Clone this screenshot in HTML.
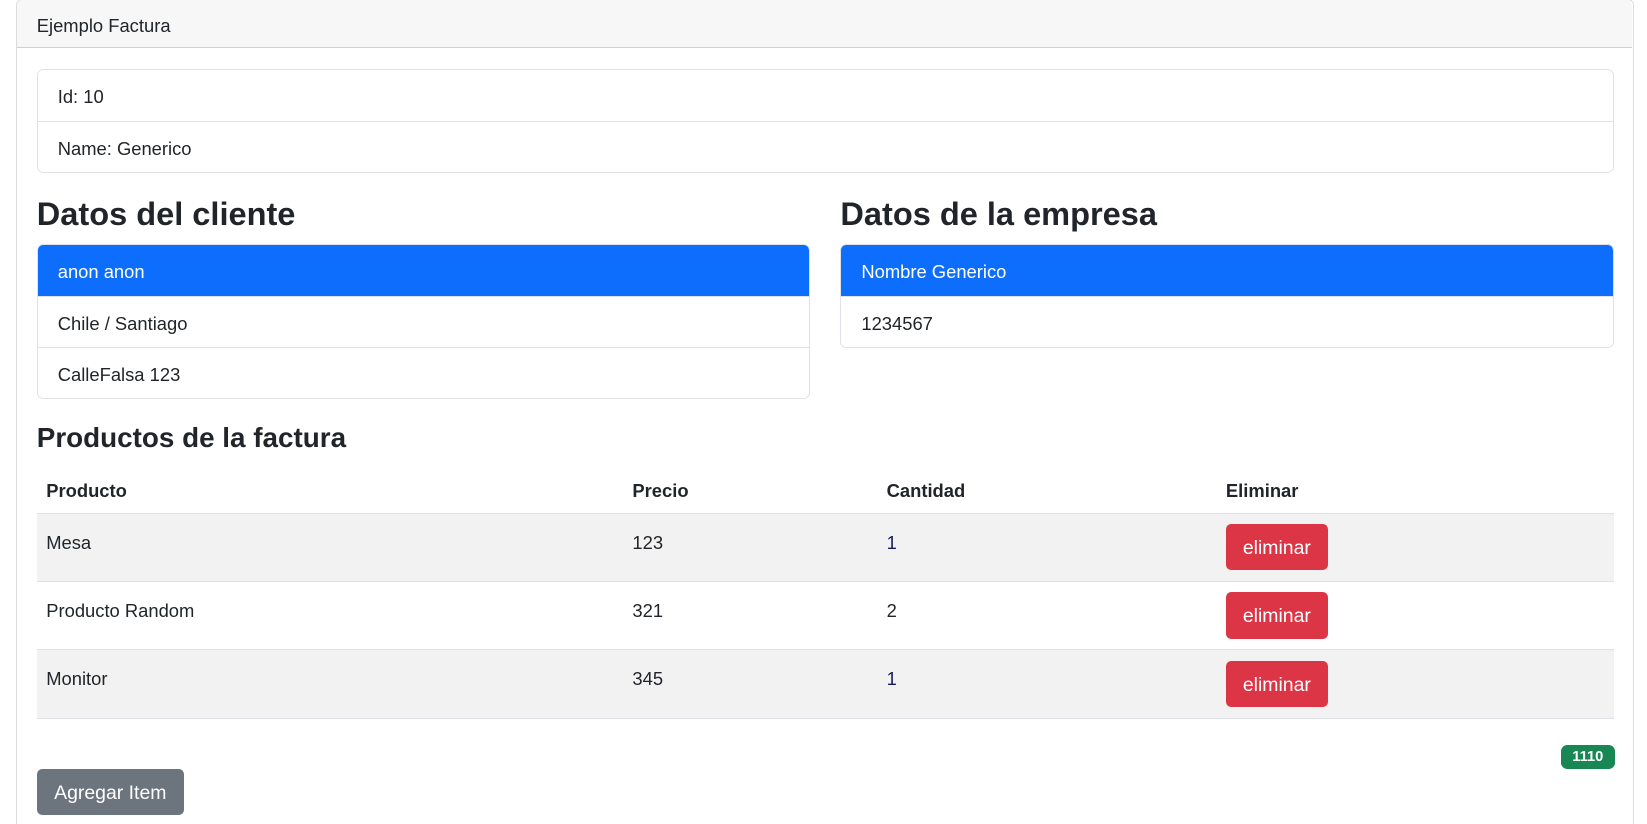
<!DOCTYPE html>
<html><head><meta charset="utf-8"><style>
*{box-sizing:border-box}
html,body{margin:0;padding:0;background:#fff;overflow:hidden}
body{width:1647px;height:824px}
#z{zoom:1.0505;position:relative;width:1568px;height:785px;font-family:"Liberation Sans",sans-serif;color:#212529;font-size:17.5px}
.a{position:absolute}
.card{left:15px;top:-1px;width:1540px;height:800px;border:1px solid #dcdcdc;border-radius:6px}
.hdr{left:16px;top:0;width:1538px;height:46px;background:#f7f7f7;border-bottom:1px solid #d0d0d0;border-radius:6px 6px 0 0;padding:14px 0 0 19px;font-size:17.5px}
.lg{border:1px solid #dee2e6;border-radius:6px;overflow:hidden}
.li{height:48.5px;padding:1px 19px 0;line-height:49px;border-top:1px solid #dee2e6}
.li:first-child{border-top:none}
.act{background:#0d6efd;color:#fff}
h2,h3{margin:0;font-weight:bold;position:absolute}
h2{font-size:31px}
h3{font-size:26.5px}
.th{font-weight:bold;top:457px;font-size:17.5px}
.row{left:35px;width:1501px;height:65px;border-bottom:1px solid #dee2e6}
.c{position:absolute;top:17px}
.btn{position:absolute;left:1132px;top:10px;width:97px;height:44px;background:#dc3545;color:#fff;border-radius:5px;text-align:center;line-height:46px;font-size:18.5px}
</style></head><body><div id="z">
<div class="a card"></div>
<div class="a hdr">Ejemplo Factura</div>
<div class="a lg" style="left:35px;top:66px;width:1501px">
<div class="li">Id: 10</div><div class="li">Name: Generico</div></div>
<h2 style="left:35px;top:187px">Datos del cliente</h2>
<h2 style="left:800px;top:187px">Datos de la empresa</h2>
<div class="a lg" style="left:35px;top:232px;width:736px">
<div class="li act">anon anon</div><div class="li">Chile / Santiago</div><div class="li">CalleFalsa 123</div></div>
<div class="a lg" style="left:800px;top:232px;width:736px">
<div class="li act">Nombre Generico</div><div class="li">1234567</div></div>
<h3 style="left:35px;top:402px">Productos de la factura</h3>
<div class="a th" style="left:44px">Producto</div>
<div class="a th" style="left:602px">Precio</div>
<div class="a th" style="left:844px">Cantidad</div>
<div class="a th" style="left:1167px">Eliminar</div>
<div class="a" style="left:35px;top:488px;width:1501px;border-top:1px solid #dee2e6"></div>
<div class="a row" style="top:489px;background:#f2f2f2"><span class="c" style="left:9px">Mesa</span><span class="c" style="left:567px">123</span><span class="c" style="left:809px;color:#1a1a5a">1</span><div class="btn">eliminar</div></div>
<div class="a row" style="top:554px"><span class="c" style="left:9px">Producto Random</span><span class="c" style="left:567px">321</span><span class="c" style="left:809px">2</span><div class="btn">eliminar</div></div>
<div class="a row" style="top:619px;background:#f2f2f2"><span class="c" style="left:9px">Monitor</span><span class="c" style="left:567px">345</span><span class="c" style="left:809px;color:#1a1a5a">1</span><div class="btn">eliminar</div></div>
<div class="a" style="left:1486px;top:709px;width:51px;height:23px;background:#198754;color:#fff;border-radius:6px;font-weight:bold;font-size:14px;text-align:center;line-height:24px">1110</div>
<div class="a" style="left:35px;top:732px;width:140px;height:44px;background:#6c757d;color:#fff;border-radius:5px;font-size:18.5px;text-align:center;line-height:46px">Agregar Item</div>
</div></body></html>
